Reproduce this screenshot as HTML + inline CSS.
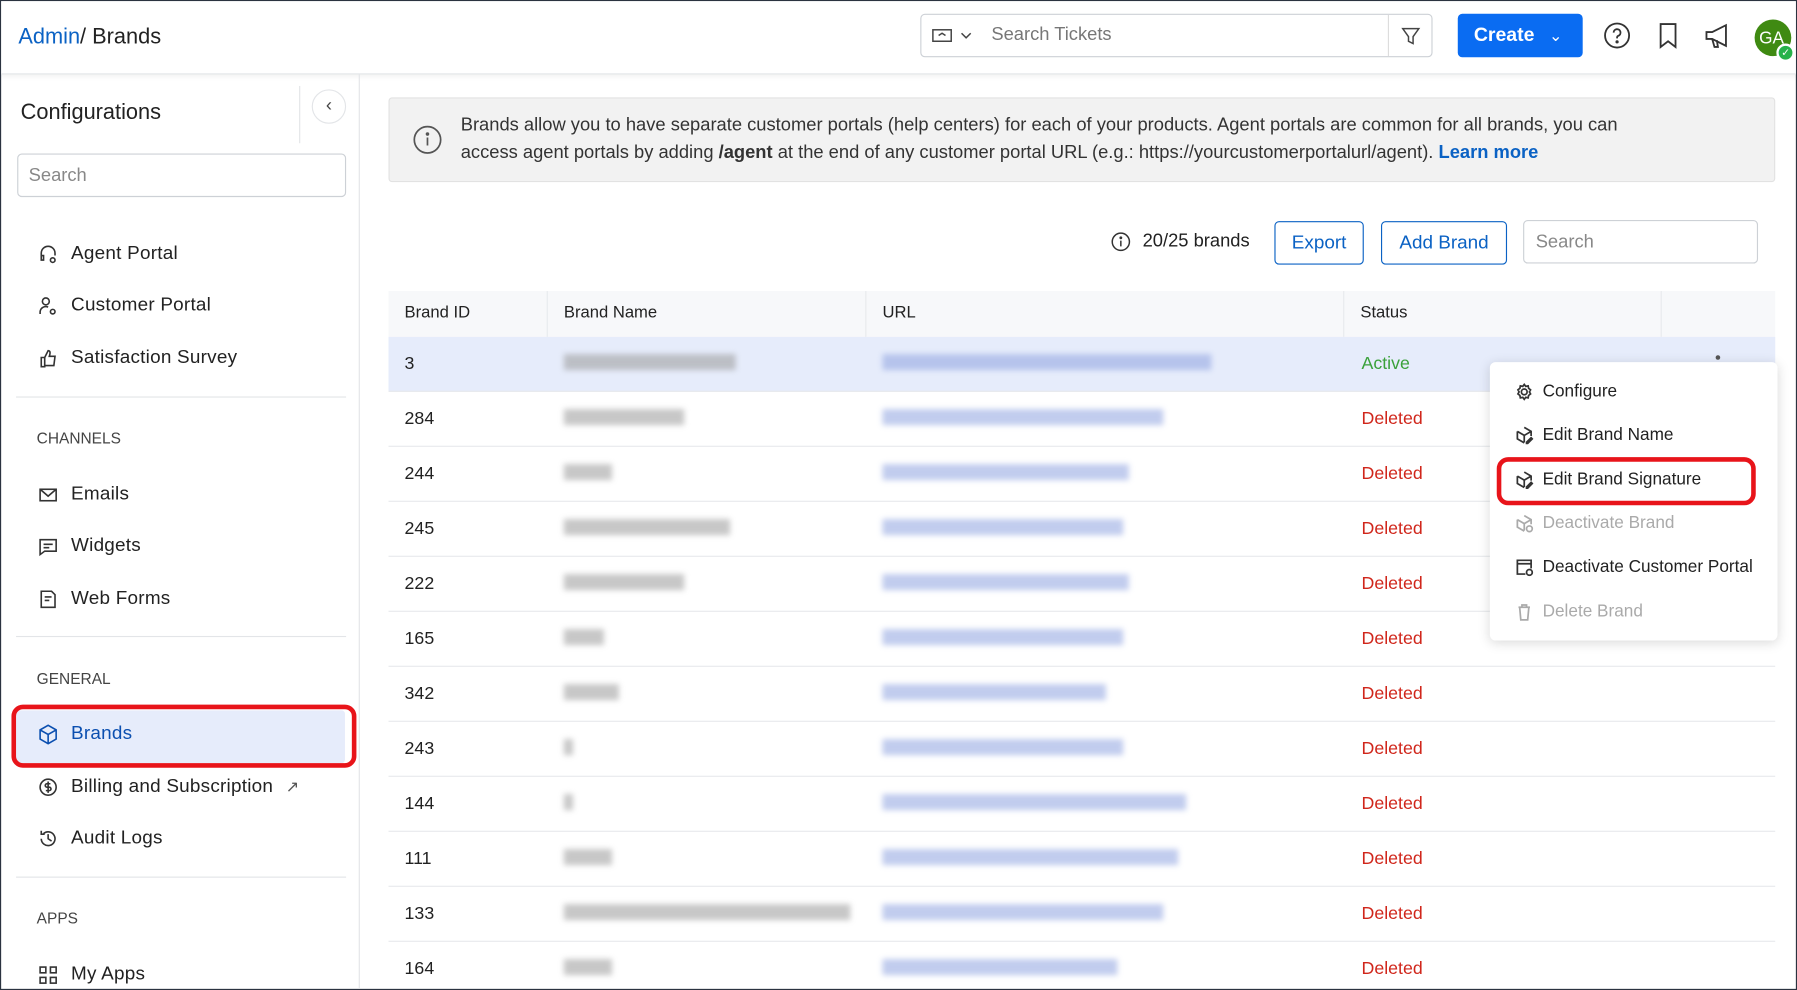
<!DOCTYPE html>
<html><head><meta charset="utf-8"><style>
*{box-sizing:border-box;margin:0;padding:0}
html,body{width:1797px;height:990px;overflow:hidden;background:#fff}
#w{width:1568px;height:864px;transform:scale(1.14605,1.14583);transform-origin:0 0;position:relative;font-family:"Liberation Sans",sans-serif;color:#222;border:1px solid #2b3340;overflow:hidden}
.a{position:absolute}
.hdr{left:0;top:0;width:1568px;height:64px;border-bottom:1px solid #e3e5e8;box-shadow:0 2px 4px rgba(0,0,0,.05);background:#fff}
.side{left:0;top:64px;width:313px;height:800px;border-right:1px solid #e3e5e8}
.nav{position:absolute;left:32px;font-size:16.5px;color:#222;display:flex;align-items:center;gap:11px;letter-spacing:.2px}
.nav svg{width:18px;height:18px;fill:none;stroke:#333;stroke-width:1.4}
.sec{position:absolute;left:31px;font-size:13.5px;color:#444}
.hr{position:absolute;left:13px;width:288px;height:1px;background:#e3e5e8}
.cell{position:absolute;font-size:15.5px;color:#222}
.blur{position:absolute;height:14px;filter:blur(2.5px);opacity:.55}
.mi{position:absolute;left:22px;font-size:15px;color:#222;display:flex;align-items:center;gap:8px}
.mi svg{width:16px;height:16px;fill:none;stroke:#333;stroke-width:1.5}
</style></head><body><div id="w">
<div class="a hdr"></div>
<div class="a" style="left:15px;top:21px;font-size:19px"><span style="color:#0b62c4">Admin</span>/ Brands</div>
<div class="a" style="left:802px;top:11px;width:447px;height:38px;border:1px solid #cdd1d6;border-radius:4px"></div>
<div class="a" style="left:1210px;top:12px;width:1px;height:36px;background:#ddd"></div>
<svg class="a" style="left:812px;top:22px" width="38" height="16" fill="none" stroke="#444" stroke-width="1.3"><rect x="1" y="3" width="16" height="10"/><path d="M6 8l3-2 3 2M26 6l4 4 4-4"/></svg>
<div class="a" style="left:864px;top:21px;font-size:16px;color:#777">Search Tickets</div>
<svg class="a" style="left:1221px;top:22px" width="18" height="17" fill="none" stroke="#444" stroke-width="1.3"><path d="M2 2h14l-5 7v6l-4-2V9z"/></svg>
<div class="a" style="left:1271px;top:11px;width:109px;height:38px;background:#0a6cf2;border-radius:4px;color:#fff;font-size:17px;font-weight:bold;padding:9px 0 0 14px">Create <span style="font-weight:normal;font-size:14px;margin-left:8px">&#8964;</span></div>
<svg class="a" style="left:1398px;top:18px" width="24" height="24" fill="none" stroke="#333" stroke-width="1.6"><circle cx="12" cy="12" r="10.5"/><path d="M9 9.5a3 3 0 1 1 4 2.8c-1 .5-1 1-1 2.2"/><circle cx="12" cy="17.5" r=".6" fill="#333"/></svg>
<svg class="a" style="left:1445px;top:18px" width="20" height="24" fill="none" stroke="#333" stroke-width="1.6"><path d="M3 2h13v20l-6.5-5L3 22z"/></svg>
<svg class="a" style="left:1485px;top:18px" width="28" height="24" fill="none" stroke="#333" stroke-width="1.6"><path d="M3 9h5l12-6v18L8 15H3zM8 15l2 7h3l-1-6"/></svg>
<div class="a" style="left:1530px;top:16px;width:32px;height:32px;border-radius:50%;background:#3f8a12;color:#fff;font-size:15px;padding:8px 0 0 4px">GA</div>
<div class="a" style="left:1549px;top:37px;width:16px;height:16px;border-radius:50%;background:#27b24a;border:2px solid #fff;color:#fff;font-size:9px;text-align:center;line-height:12px">✓</div>

<div class="a side"></div>
<div class="a" style="left:17px;top:87px;font-size:19px">Configurations</div>
<div class="a" style="left:260px;top:74px;width:1px;height:50px;background:#e3e5e8"></div>
<div class="a" style="left:271px;top:77px;width:30px;height:30px;border-radius:50%;border:1px solid #e3e5e8;text-align:center;font-size:16px;line-height:28px;color:#444">‹</div>
<div class="a" style="left:14px;top:133px;width:287px;height:38px;border:1px solid #cdd1d6;border-radius:4px;font-size:16px;color:#888;padding:10px 9px">Search</div>
<div class="nav" style="top:211px"><svg viewBox="0 0 18 18"><path d="M3 11V8a6 6 0 0 1 12 0v2M3 11v3h2v-4H3"/><circle cx="13" cy="14" r="2"/></svg>Agent Portal</div>
<div class="nav" style="top:256px"><svg viewBox="0 0 18 18"><circle cx="7" cy="5" r="3"/><path d="M2 16v-2a5 5 0 0 1 7-4"/><circle cx="13" cy="14" r="2"/></svg>Customer Portal</div>
<div class="nav" style="top:302px"><svg viewBox="0 0 18 18"><path d="M3 8h3v8H3zM6 8l3-6c2 0 2 2 1 5h5l-1 8H6"/></svg>Satisfaction Survey</div>
<div class="hr" style="top:345px"></div>
<div class="sec" style="top:374px">CHANNELS</div>
<div class="nav" style="top:421px"><svg viewBox="0 0 18 18"><rect x="2" y="4" width="14" height="10"/><path d="M2 4l7 6 7-6"/></svg>Emails</div>
<div class="nav" style="top:466px"><svg viewBox="0 0 18 18"><path d="M2 3h14v10H6l-4 3z M5 7h8M5 10h5"/></svg>Widgets</div>
<div class="nav" style="top:512px"><svg viewBox="0 0 18 18"><path d="M3 2h9l3 3v11H3zM6 7h6M6 10h4"/></svg>Web Forms</div>
<div class="hr" style="top:554px"></div>
<div class="sec" style="top:584px">GENERAL</div>
<div class="a" style="left:13px;top:619px;width:287px;height:46px;background:#e6ecfb;border-radius:3px"></div>
<div class="a" style="left:9px;top:614px;width:301px;height:55px;border:4px solid #e8141a;border-radius:10px"></div>
<div class="nav" style="top:630px;color:#0b4fb0"><svg viewBox="0 0 18 18" style="stroke:#0b4fb0"><path d="M9 1l7 4v8l-7 4-7-4V5zM2 5l7 4 7-4M9 9v8"/></svg>Brands</div>
<div class="nav" style="top:676px"><svg viewBox="0 0 18 18"><circle cx="9" cy="9" r="7"/><path d="M11 6H8a1.5 1.5 0 0 0 0 3h2a1.5 1.5 0 0 1 0 3H7M9 4v10"/></svg>Billing and Subscription <span style="font-size:14px;color:#555">↗</span></div>
<div class="nav" style="top:721px"><svg viewBox="0 0 18 18"><path d="M3 9a6 6 0 1 0 2-4.5M3 2v3h3M9 5v4l3 2"/></svg>Audit Logs</div>
<div class="hr" style="top:764px"></div>
<div class="sec" style="top:793px">APPS</div>
<div class="nav" style="top:840px"><svg viewBox="0 0 18 18"><rect x="2" y="2" width="5" height="5"/><rect x="11" y="2" width="5" height="5"/><rect x="2" y="11" width="5" height="5"/><rect x="11" y="11" width="5" height="5"/></svg>My Apps</div>

<div class="a" style="left:338px;top:84px;width:1210px;height:74px;background:#f2f2f2;border:1px solid #e2e2e2;border-radius:3px"></div>
<svg class="a" style="left:359px;top:108px" width="26" height="26" fill="none" stroke="#555" stroke-width="1.5"><circle cx="13" cy="13" r="11.5"/><path d="M13 11v7"/><circle cx="13" cy="8" r=".8" fill="#555"/></svg>
<div class="a" style="left:401px;top:97px;font-size:16px;line-height:24px;color:#333;width:1015px">Brands allow you to have separate customer portals (help centers) for each of your products. Agent portals are common for all brands, you can access agent portals by adding <b>/agent</b> at the end of any customer portal URL (e.g.: https://yourcustomerportalurl/agent). <span style="color:#0b62c4;font-weight:bold">Learn more</span></div>

<svg class="a" style="left:968px;top:201px" width="18" height="18" fill="none" stroke="#333" stroke-width="1.3"><circle cx="9" cy="9" r="7.5"/><path d="M9 8v5"/><circle cx="9" cy="5.5" r=".6" fill="#333"/></svg>
<div class="a" style="left:996px;top:201px;font-size:16px">20/25 brands</div>
<div class="a" style="left:1111px;top:192px;width:78px;height:38px;border:1px solid #0b62c4;border-radius:4px;color:#0b62c4;font-size:16.5px;text-align:center;line-height:36px">Export</div>
<div class="a" style="left:1204px;top:192px;width:110px;height:38px;border:1px solid #0b62c4;border-radius:4px;color:#0b62c4;font-size:16.5px;text-align:center;line-height:36px">Add Brand</div>
<div class="a" style="left:1328px;top:191px;width:205px;height:38px;border:1px solid #cdd1d6;border-radius:4px;color:#888;font-size:16px;padding:10px 10px">Search</div>

<div class="a" style="left:338px;top:253px;width:1210px;height:40px;background:#f7f8fa"></div>
<div class="a" style="left:476px;top:253px;width:1px;height:40px;background:#e8eaed"></div>
<div class="a" style="left:754px;top:253px;width:1px;height:40px;background:#e8eaed"></div>
<div class="a" style="left:1171px;top:253px;width:1px;height:40px;background:#e8eaed"></div>
<div class="a" style="left:1448px;top:253px;width:1px;height:40px;background:#e8eaed"></div>
<div class="cell" style="left:352px;top:264px;font-size:14.5px">Brand ID</div>
<div class="cell" style="left:491px;top:264px;font-size:14.5px">Brand Name</div>
<div class="cell" style="left:769px;top:264px;font-size:14.5px">URL</div>
<div class="cell" style="left:1186px;top:264px;font-size:14.5px">Status</div>
<div class="a" style="left:338px;top:293px;width:1210px;height:48px;background:#e6ecfb"></div>
<div class="a" style="left:1496px;top:309px;width:4px;height:4px;border-radius:50%;background:#555"></div>
<div id="rows"></div>
<script>
var d=[["3",150,287,"Active"],["284",105,245],["244",42,215],["245",145,210],["222",105,215],["165",35,210],["342",48,195],["243",8,210],["144",8,265],["111",42,258],["133",250,245],["164",42,205]];
var h='';d.forEach(function(r,i){var y=293+i*48;
h+='<div class="a" style="left:338px;top:'+(y+47)+'px;width:1210px;height:1px;background:#e8eaed"></div>';
h+='<div class="cell" style="left:352px;top:'+(y+15)+'px">'+r[0]+'</div>';
h+='<div class="blur" style="left:491px;top:'+(y+15)+'px;width:'+r[1]+'px;background:#9a9a9a"></div>';
h+='<div class="blur" style="left:769px;top:'+(y+15)+'px;width:'+r[2]+'px;background:#8fa3e0"></div>';
h+='<div class="cell" style="left:1187px;top:'+(y+15)+'px;color:'+(r[3]?'#3aa13a':'#d0261b')+'">'+(r[3]||'Deleted')+'</div>';});
document.getElementById('rows').innerHTML=h;
</script>

<div class="a" style="left:1299px;top:315px;width:251px;height:243px;background:#fff;border-radius:5px;box-shadow:0 2px 10px rgba(0,0,0,.15)"></div>
<div class="a" style="left:1299px;top:315px;width:251px;height:243px">
<div class="mi" style="top:17px"><svg viewBox="0 0 16 16"><circle cx="8" cy="8" r="2.5"/><path d="M8 1.5l1.3 1.7 2.1-.4.4 2.1 1.7 1.3-1 1.8 1 1.8-1.7 1.3-.4 2.1-2.1-.4L8 14.5l-1.3-1.7-2.1.4-.4-2.1L2.5 9.8l1-1.8-1-1.8 1.7-1.3.4-2.1 2.1.4z"/></svg>Configure</div>
<div class="mi" style="top:55px"><svg viewBox="0 0 16 16"><path d="M8 1l6 3.5v4M2 4.5V11l6 3.5M2 4.5l6 3.5 6-3.5M8 8v6M10 14l4-4 1 1-4 4h-1z"/></svg>Edit Brand Name</div>
<div class="mi" style="top:94px"><svg viewBox="0 0 16 16"><path d="M8 1l6 3.5v4M2 4.5V11l6 3.5M2 4.5l6 3.5 6-3.5M8 8v6M10 14l4-4 1 1-4 4h-1z"/></svg>Edit Brand Signature</div>
<div class="mi" style="top:132px;color:#aaa"><svg viewBox="0 0 16 16" style="stroke:#aaa"><path d="M8 1l6 3.5v4M2 4.5V11l6 3.5M2 4.5l6 3.5 6-3.5M8 8v6"/><circle cx="12.5" cy="12.5" r="2.5"/></svg>Deactivate Brand</div>
<div class="mi" style="top:170px"><svg viewBox="0 0 16 16"><path d="M9 14H2V2h12v7M2 5h12"/><circle cx="12.5" cy="12.5" r="2.5"/></svg>Deactivate Customer Portal</div>
<div class="mi" style="top:209px;color:#aaa"><svg viewBox="0 0 16 16" style="stroke:#aaa"><path d="M3 4h10M6 4V2h4v2M4 4l1 11h6l1-11"/></svg>Delete Brand</div>
</div>
<div class="a" style="left:1305px;top:398px;width:226px;height:42px;border:4px solid #e8141a;border-radius:10px"></div>
</div></body></html>
